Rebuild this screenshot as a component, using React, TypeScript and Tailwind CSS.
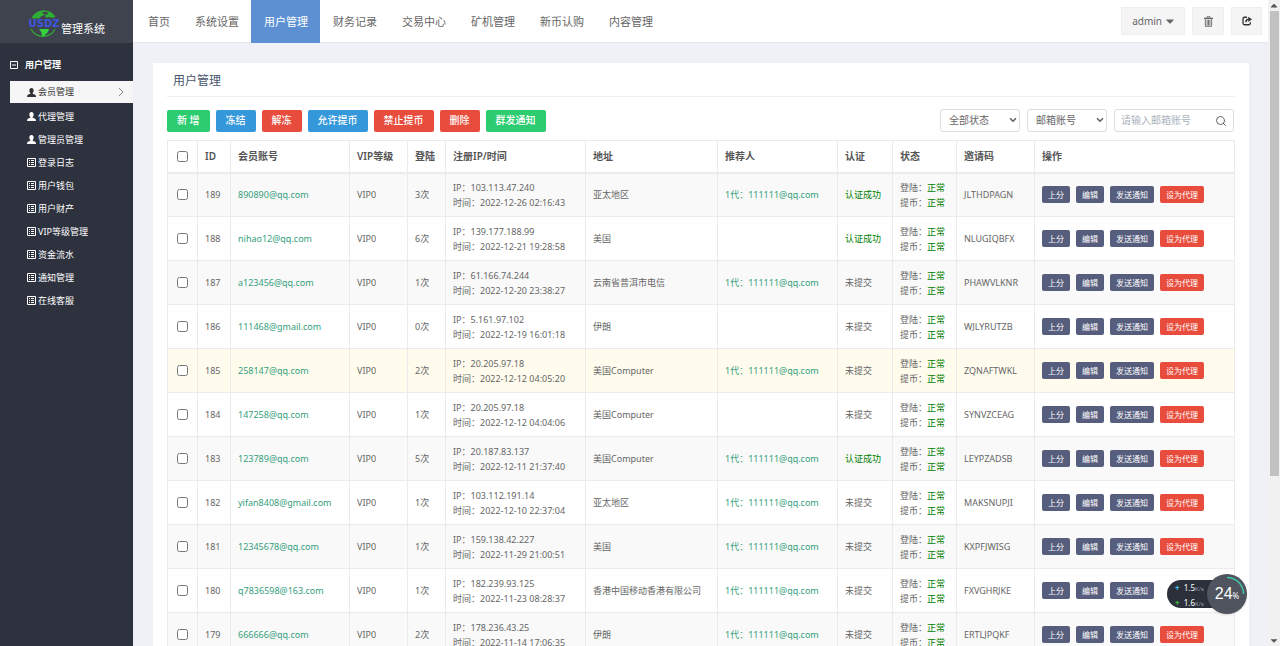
import { useState } from 'react'
import { FaCaretDown, FaCaretUp } from 'react-icons/fa'
import { ChevronDown, Search } from 'lucide-react'

type Member = {
  id: number
  account: string
  logins: number
  ip: string
  time: string
  address: string
  referrer?: boolean
  verified?: boolean
  agent?: boolean
  code: string
}

const navItems = ['首页', '系统设置', '用户管理', '财务记录', '交易中心', '矿机管理', '新币认购', '内容管理']

const menuItems = [
  { label: '会员管理', icon: 'user' },
  { label: '代理管理', icon: 'user' },
  { label: '管理员管理', icon: 'user' },
  { label: '登录日志', icon: 'list' },
  { label: '用户钱包', icon: 'list' },
  { label: '用户财产', icon: 'list' },
  { label: 'VIP等级管理', icon: 'list' },
  { label: '资金流水', icon: 'list' },
  { label: '通知管理', icon: 'list' },
  { label: '在线客服', icon: 'list' },
]

const toolbar = [
  { label: '新 增', color: 'bg-[#2ecc71]' },
  { label: '冻结', color: 'bg-[#3498db]' },
  { label: '解冻', color: 'bg-[#e74c3c]' },
  { label: '允许提币', color: 'bg-[#3498db]' },
  { label: '禁止提币', color: 'bg-[#e74c3c]' },
  { label: '删除', color: 'bg-[#e74c3c]' },
  { label: '群发通知', color: 'bg-[#2ecc71]' },
]

const columns = [
  { label: 'ID', width: 'w-[33px]' },
  { label: '会员账号', width: 'w-[119px]' },
  { label: 'VIP等级', width: 'w-[58px]' },
  { label: '登陆', width: 'w-[38px]' },
  { label: '注册IP/时间', width: 'w-[140px]' },
  { label: '地址', width: 'w-[132px]' },
  { label: '推荐人', width: 'w-[120px]' },
  { label: '认证', width: 'w-[55px]' },
  { label: '状态', width: 'w-[64px]' },
  { label: '邀请码', width: 'w-[78px]' },
  { label: '操作', width: '' },
]

const members: Member[] = [
  { id: 189, account: '890890@qq.com', logins: 3, ip: '103.113.47.240', time: '2022-12-26 02:16:43', address: '亚太地区', referrer: true, verified: true, code: 'JLTHDPAGN' },
  { id: 188, account: 'nihao12@qq.com', logins: 6, ip: '139.177.188.99', time: '2022-12-21 19:28:58', address: '美国', verified: true, code: 'NLUGIQBFX' },
  { id: 187, account: 'a123456@qq.com', logins: 1, ip: '61.166.74.244', time: '2022-12-20 23:38:27', address: '云南省普洱市电信', referrer: true, code: 'PHAWVLKNR' },
  { id: 186, account: '111468@gmail.com', logins: 0, ip: '5.161.97.102', time: '2022-12-19 16:01:18', address: '伊朗', code: 'WJLYRUTZB' },
  { id: 185, account: '258147@qq.com', logins: 2, ip: '20.205.97.18', time: '2022-12-12 04:05:20', address: '美国Computer', referrer: true, code: 'ZQNAFTWKL' },
  { id: 184, account: '147258@qq.com', logins: 1, ip: '20.205.97.18', time: '2022-12-12 04:04:06', address: '美国Computer', code: 'SYNVZCEAG' },
  { id: 183, account: '123789@qq.com', logins: 5, ip: '20.187.83.137', time: '2022-12-11 21:37:40', address: '美国Computer', referrer: true, verified: true, code: 'LEYPZADSB' },
  { id: 182, account: 'yifan8408@gmail.com', logins: 1, ip: '103.112.191.14', time: '2022-12-10 22:37:04', address: '亚太地区', referrer: true, code: 'MAKSNUPJI' },
  { id: 181, account: '12345678@qq.com', logins: 1, ip: '159.138.42.227', time: '2022-11-29 21:00:51', address: '美国', referrer: true, code: 'KXPFJWISG' },
  { id: 180, account: 'q7836598@163.com', logins: 1, ip: '182.239.93.125', time: '2022-11-23 08:28:37', address: '香港中国移动香港有限公司', referrer: true, agent: true, code: 'FXVGHRJKE' },
  { id: 179, account: '666666@qq.com', logins: 2, ip: '178.236.43.25', time: '2022-11-14 17:06:35', address: '伊朗', referrer: true, code: 'ERTLJPQKF' },
]

function UserIcon() {
  return (
    <svg viewBox="0 0 10 10" className="size-[9px]" fill="currentColor" aria-hidden="true">
      <path d="M5 0C3.4 0 2.6 1.1 2.6 2.8c0 1.3.5 2.4 1.2 3v.7C2.6 7 .4 7.5.2 8.6L0 10h10l-.2-1.4C9.6 7.5 7.4 7 6.2 6.5v-.7c.7-.6 1.2-1.7 1.2-3C7.4 1.1 6.6 0 5 0z" />
    </svg>
  )
}

function ListIcon() {
  return (
    <svg viewBox="0 0 9 9" className="size-[9px]" fill="none" stroke="currentColor" aria-hidden="true">
      <path d="M.5.5h8v8h-8zM2 2.5h1M4 2.5h3M2 4.5h1M4 4.5h3M2 6.5h1M4 6.5h3" />
    </svg>
  )
}

function TrashIcon() {
  return (
    <svg viewBox="0 0 10 12" className="h-[11px] w-[9px]" fill="none" stroke="currentColor" aria-hidden="true">
      <path d="M0 2.5h10" strokeWidth="1.4" />
      <path d="M3.3 2V.7h3.4V2M1.5 3v8.3h7V3M3.5 4v6.5M5 4v6.5M6.5 4v6.5" />
    </svg>
  )
}

function ExportIcon() {
  return (
    <svg viewBox="0 0 12 12" className="size-[10px]" fill="none" stroke="currentColor" aria-hidden="true">
      <path d="M6 1.5H3A1.8 1.8 0 0 0 1.2 3.3v5.4A1.8 1.8 0 0 0 3 10.5h5.2A1.8 1.8 0 0 0 10 8.7V7.5" strokeWidth="1.6" />
      <path d="M4.8 7.5c0-2.6 1.2-3.5 3.2-3.5" strokeWidth="1.8" />
      <path d="M7.5.8 12 4 7.5 7.2z" fill="currentColor" stroke="none" />
    </svg>
  )
}

function Logo() {
  return (
    <svg viewBox="0 0 34 30" className="h-[30px] w-[34px]" aria-hidden="true">
      <path d="M5 9A13.5 13.5 0 0 1 28 8M4 20a13.5 13.5 0 0 0 24 0" fill="none" stroke="#2fae35" strokeWidth="1.2" />
      <path d="M6 8C9 3 14 1 18 1.5l-3 2.5 3 1.5-4 2-2 2H6zM20 2c3 .5 6 2.5 8 6l-3 1-3-1-3 1-1-3 3-1z" fill="#2fae35" />
      <path d="M12 20h10l-1 3-4 4-2 .5-.5-4z" fill="#35d43c" />
      <text x="17" y="18" textAnchor="middle" fontFamily="'DejaVu Sans', sans-serif" fontWeight="bold" fontSize="10" fill="#3d57e0">USDZ</text>
    </svg>
  )
}

function FilterSelect({ label, option }: { label: string; option: string }) {
  return (
    <div className="relative w-20">
      <select aria-label={label} className="h-[23px] w-full appearance-none rounded-[3px] border border-[#ddd] bg-white pl-2">
        <option>{option}</option>
      </select>
      <ChevronDown className="pointer-events-none absolute top-1.5 right-0.5 size-2.5" strokeWidth={4} />
    </div>
  )
}

function SpeedWidget() {
  return (
    <div className="absolute right-[33px] bottom-8 flex h-10 items-center">
      <div className="-mr-5 h-7 w-15 rounded-full bg-[#2c303b] py-0.5 pl-2 text-[8px] leading-3 text-white">
        <p><span className="mr-0.5 font-bold text-[#3fc1e8]">+</span> 1.5<span className="text-[6px] text-gray-400">K/s</span></p>
        <p className="mt-0.5"><span className="mr-0.5 font-bold text-[#3fc13f]">+</span> 1.6<span className="text-[6px] text-gray-400">K/s</span></p>
      </div>
      <div className="relative flex size-10 items-center justify-center rounded-full bg-[#50545f] text-white shadow">
        <svg viewBox="0 0 40 40" className="absolute inset-0" fill="none" aria-hidden="true">
          <path d="M20 3.5A16.5 16.5 0 0 1 36.5 20" stroke="#41c7a5" strokeWidth="1.5" />
        </svg>
        <span className="font-['Liberation_Sans',sans-serif] text-base">24</span>
        <span className="mt-1 text-[8px]">%</span>
      </div>
    </div>
  )
}

export default function App() {
  const [selectedIds, setSelectedIds] = useState<Set<number>>(new Set())

  const toggleRow = (id: number) => {
    const next = new Set(selectedIds)
    if (next.has(id)) {
      next.delete(id)
    } else {
      next.add(id)
    }
    setSelectedIds(next)
  }

  const toggleAll = () => {
    setSelectedIds(selectedIds.size === members.length ? new Set() : new Set(members.map((m) => m.id)))
  }

  return (
    <div className="relative flex h-screen overflow-hidden bg-[#eff1f7] font-['Noto_Sans','Noto_Sans_CJK_SC',sans-serif] text-[9px] text-[#666]">
      {/* Sidebar */}
      <aside className="w-[133px] shrink-0 bg-[#2d323e] text-white">
        <div className="flex h-[43px] items-center bg-[#3f434d] pt-1 pl-[27px]">
          <Logo />
          <span className="mt-3 text-[11px]">管理系统</span>
        </div>
        <div className="flex h-[38px] items-center gap-[7px] pt-1.5 pl-2.5 font-bold">
          <svg viewBox="0 0 8 8" className="size-2" fill="none" stroke="currentColor" aria-hidden="true">
            <path d="M.5.5h7v7h-7zM2 4h4" />
          </svg>
          用户管理
        </div>
        <nav className="pl-2.5">
          {menuItems.map((item, i) => (
            <a
              key={item.label}
              href="#"
              className={`flex items-center gap-0.5 pr-2 pl-[17px] ${i === 0 ? 'mb-0.5 h-[22px] bg-[#f6f6f6] text-[#333]' : 'h-[23px] text-white'}`}
            >
              {item.icon === 'user' ? <UserIcon /> : <ListIcon />}
              {item.label}
              {i === 0 && (
                <svg viewBox="0 0 8 8" className="ml-auto size-2" fill="none" stroke="#888" aria-hidden="true">
                  <path d="m2 0 4 4-4 4" />
                </svg>
              )}
            </a>
          ))}
        </nav>
      </aside>

      <div className="min-w-0 flex-1">
        {/* Top navigation */}
        <header className="flex h-[43px] items-center border-b border-[#e4e6ec] bg-white">
          <nav className="flex h-[43px] pl-0.5 text-[11px]">
            {navItems.map((item) => (
              <a
                key={item}
                href="#"
                className={`flex items-center pt-0.5 pr-3 pl-[13px] ${item === '用户管理' ? 'bg-[#5c90d2] text-white' : 'text-[#666]'}`}
              >
                {item}
              </a>
            ))}
          </nav>
          <div className="mr-1.5 ml-auto flex gap-[7px]">
            <button className="flex h-7 items-center gap-1 border border-[#eee] bg-[#f5f5f5] px-2.5 text-[10px]">
              admin
              <FaCaretDown className="h-3.5 w-2" />
            </button>
            <button aria-label="清除缓存" className="flex h-7 w-8 items-center justify-center border border-[#eee] bg-[#f5f5f5]">
              <TrashIcon />
            </button>
            <button aria-label="退出" className="flex h-7 w-[31px] items-center justify-center border border-[#eee] bg-[#f5f5f5] text-[#333]">
              <ExportIcon />
            </button>
          </div>
        </header>

        {/* Content card */}
        <main className="mt-5 mr-[19px] ml-5 bg-white px-3.5">
          <h1 className="flex h-[34px] items-center border-b border-[#eceef2] pt-0.5 pl-1.5 text-xs text-[#46546c]">用户管理</h1>

          <div className="flex items-center pt-3 pb-2">
            <div className="flex gap-1.5">
              {toolbar.map((btn) => (
                <button key={btn.label} className={`h-[22px] rounded-xs px-2.5 text-[10px] font-medium text-white ${btn.color}`}>
                  {btn.label}
                </button>
              ))}
            </div>
            <div className="mr-px ml-auto flex gap-[7px] text-[10px]">
              <FilterSelect label="状态" option="全部状态" />
              <FilterSelect label="搜索类型" option="邮箱账号" />
              <label className="flex h-[23px] w-[120px] items-center rounded-[3px] border border-[#ddd] px-1.5">
                <input aria-label="邮箱账号" placeholder="请输入邮箱账号" className="min-w-0 flex-1 outline-none placeholder:text-[#aab2bd]" />
                <Search className="size-3 shrink-0" />
              </label>
            </div>
          </div>

          <table className="w-full table-fixed border-collapse text-left [&_td]:border [&_td]:border-[#ebebeb] [&_td]:px-[7px] [&_th]:border [&_th]:border-[#ebebeb] [&_th]:px-[7px]">
            <thead>
              <tr className="h-8 border-b-2 border-[#ebebeb] text-[10px] text-[#555]">
                <th className="w-[30px]">
                  <input type="checkbox" aria-label="全选" className="mx-0.5 block size-[11px]" checked={selectedIds.size === members.length} onChange={toggleAll} />
                </th>
                {columns.map((col) => (
                  <th key={col.label} className={`font-semibold whitespace-nowrap ${col.width}`}>{col.label}</th>
                ))}
              </tr>
            </thead>
            <tbody>
              {members.map((m, i) => (
                <tr key={m.id} className={`h-11 leading-[15px] whitespace-nowrap ${m.id === 185 ? 'bg-[#fffcee]' : i % 2 === 0 ? 'bg-[#f9f9f9]' : 'bg-white'}`}>
                  <td>
                    <input type="checkbox" aria-label={`选择 ${m.id}`} className="mx-0.5 block size-[11px]" checked={selectedIds.has(m.id)} onChange={() => toggleRow(m.id)} />
                  </td>
                  <td>{m.id}</td>
                  <td><a href="#" className="text-[#34a07d]">{m.account}</a></td>
                  <td>VIP0</td>
                  <td>{m.logins}次</td>
                  <td>
                    <p>IP：{m.ip}</p>
                    <p>时间：{m.time}</p>
                  </td>
                  <td>{m.address}</td>
                  <td>{m.referrer && <a href="#" className="text-[#34a07d]">1代：111111@qq.com</a>}</td>
                  <td>{m.verified ? <span className="text-[#008000]">认证成功</span> : '未提交'}</td>
                  <td>
                    <p>登陆：<span className="text-[#008000]">正常</span></p>
                    <p>提币：<span className="text-[#008000]">正常</span></p>
                  </td>
                  <td>{m.code}</td>
                  <td>
                    <div className="flex gap-1.5 text-[8px] text-white">
                      <button className="h-[17px] rounded-xs bg-[#565d7d] px-1.5">上分</button>
                      <button className="h-[17px] rounded-xs bg-[#565d7d] px-1.5">编辑</button>
                      <button className="h-[17px] rounded-xs bg-[#565d7d] px-1.5">发送通知</button>
                      {!m.agent && <button className="h-[17px] rounded-xs bg-[#e74c3c] px-1.5">设为代理</button>}
                    </div>
                  </td>
                </tr>
              ))}
            </tbody>
          </table>
        </main>
      </div>

      {/* Scrollbar */}
      <div className="flex w-3 shrink-0 flex-col items-center bg-[#f1f1f1] text-[#555]">
        <FaCaretUp className="h-[11px] w-2" />
        <div className="w-[9px] flex-[465] bg-[#c1c1c1]" />
        <div className="flex-[159]" />
        <FaCaretDown className="h-[11px] w-2" />
      </div>

      <SpeedWidget />
    </div>
  )
}
